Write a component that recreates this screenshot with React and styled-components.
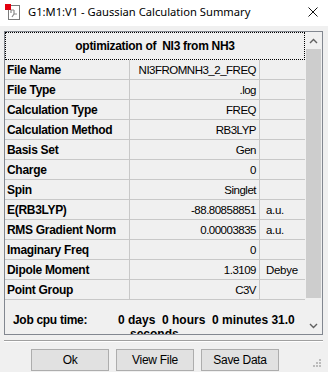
import React from "react";
import styled, { createGlobalStyle } from "styled-components";

const GlobalStyle = createGlobalStyle`
  *, *::before, *::after { box-sizing: border-box; }
  html, body { margin: 0; padding: 0; background: #f0f0f0; }
  body { font-family: "Liberation Sans", Arial, sans-serif; }
`;

const rows = [
  { label: "File Name", value: "NI3FROMNH3_2_FREQ" },
  { label: "File Type", value: ".log" },
  { label: "Calculation Type", value: "FREQ" },
  { label: "Calculation Method", value: "RB3LYP" },
  { label: "Basis Set", value: "Gen" },
  { label: "Charge", value: "0" },
  { label: "Spin", value: "Singlet" },
  { label: "E(RB3LYP)", value: "-88.80858851", unit: "a.u." },
  { label: "RMS Gradient Norm", value: "0.00003835", unit: "a.u." },
  { label: "Imaginary Freq", value: "0" },
  { label: "Dipole Moment", value: "1.3109", unit: "Debye" },
  { label: "Point Group", value: "C3V" },
];

export default () => {
  return (
    <>
      <GlobalStyle />
      <Window>
        <TitleBar>
          <AppIcon viewBox="0 0 16 16">
            <rect x="3.5" y="1.5" width="11" height="14" fill="#fff" stroke="#7a7a7a" />
            <path d="M6 6h3M9 6v4M9 10h3M9 10l-2 3M6 6v3" stroke="#8a8a8a" strokeWidth="1.2" fill="none" />
            <rect x="0" y="0" width="6" height="6" fill="#e3000f" />
          </AppIcon>
          <Title>G1:M1:V1 - Gaussian Calculation Summary</Title>
          <CloseIcon viewBox="0 0 10 10">
            <path d="M0.5 0.5L9.5 9.5M9.5 0.5L0.5 9.5" stroke="#111" strokeWidth="1" />
          </CloseIcon>
        </TitleBar>
        <Content>
          <Panel>
            <Table>
              <HeaderRow>optimization of&nbsp; NI3 from NH3</HeaderRow>
              {rows.map((r) => (
                <Row key={r.label}>
                  <Label>{r.label}</Label>
                  <Value>{r.value}</Value>
                  <Unit>{r.unit}</Unit>
                </Row>
              ))}
              <JobRow>
                <JobLabel>Job cpu time:</JobLabel>
                <JobValue>
                  {"0 days  0 hours  0 minutes 31.0"}
                  <Wrapped>seconds</Wrapped>
                </JobValue>
              </JobRow>
            </Table>
            <Scrollbar>
              <Arrow viewBox="0 0 9 6">
                <path d="M1 5L4.5 1.5L8 5" stroke="#606060" strokeWidth="1.4" fill="none" />
              </Arrow>
              <Track>
                <Thumb />
              </Track>
              <Arrow viewBox="0 0 9 6">
                <path d="M1 1L4.5 4.5L8 1" stroke="#606060" strokeWidth="1.4" fill="none" />
              </Arrow>
            </Scrollbar>
          </Panel>
          <Separator />
          <Buttons>
            <Button>Ok</Button>
            <Button>View File</Button>
            <Button>Save Data</Button>
          </Buttons>
        </Content>
        <Grip viewBox="0 0 10 10">
          <rect x="8" y="0" width="2" height="2" />
          <rect x="5" y="3" width="2" height="2" />
          <rect x="8" y="3" width="2" height="2" />
          <rect x="2" y="6" width="2" height="2" />
          <rect x="5" y="6" width="2" height="2" />
          <rect x="8" y="6" width="2" height="2" />
        </Grip>
      </Window>
    </>
  );
};

const Window = styled.div`
  position: relative;
  width: 328px;
  height: 372px;
  background: #f0f0f0;
  overflow: hidden;
  display: flex;
  flex-direction: column;
`;

const TitleBar = styled.div`
  height: 26px;
  flex-shrink: 0;
  background: #fff;
  display: flex;
  align-items: center;
  padding: 0 10px 3px 5px;
`;

const AppIcon = styled.svg`
  width: 16px;
  height: 16px;
  flex-shrink: 0;
`;

const Title = styled.div`
  flex: 1;
  margin-left: 7px;
  font-family: "Noto Sans", "Open Sans", sans-serif;
  font-size: 11.2px;
  color: #000;
  white-space: nowrap;
`;

const CloseIcon = styled.svg`
  width: 10px;
  height: 10px;
`;

const Content = styled.div`
  padding: 5px 5px 0 4px;
  display: flex;
  flex-direction: column;
`;

const Panel = styled.div`
  height: 304px;
  flex-shrink: 0;
  border: 1px solid #828790;
  display: flex;
  overflow: hidden;
`;

const Table = styled.div`
  width: 300px;
  display: flex;
  flex-direction: column;
  overflow: hidden;
  font-size: 12px;
  color: #000;
`;

const HeaderRow = styled.div`
  height: 28px;
  border: 1px dotted #000;
  display: flex;
  align-items: center;
  justify-content: center;
  font-weight: bold;
  letter-spacing: -0.3px;
  flex-shrink: 0;
`;

const Row = styled.div`
  display: grid;
  grid-template-columns: 125px 130px 45px;
  height: 20px;
  border-bottom: 1px solid #c8c8c8;
  flex-shrink: 0;
`;

const Cell = styled.div`
  display: flex;
  align-items: center;
  white-space: nowrap;
  overflow: hidden;
`;

const Label = styled(Cell)`
  padding-left: 2px;
  font-weight: bold;
  letter-spacing: -0.3px;
  border-right: 1px solid #c8c8c8;
`;

const Value = styled(Cell)`
  justify-content: flex-end;
  padding-right: 3px;
  font-size: 11.5px;
  letter-spacing: -0.5px;
  border-right: 1px solid #c8c8c8;
`;

const Unit = styled(Cell)`
  padding-left: 6px;
  font-size: 11.5px;
  letter-spacing: -0.3px;
`;

const JobRow = styled.div`
  display: flex;
  padding: 13px 0 0 8px;
  font-weight: bold;
  line-height: 14px;
`;

const JobLabel = styled.div`
  width: 105px;
  flex-shrink: 0;
  letter-spacing: -0.3px;
`;

const JobValue = styled.div`
  white-space: pre;
`;

const Wrapped = styled.div`
  padding-left: 12px;
`;

const Scrollbar = styled.div`
  width: 17px;
  display: flex;
  flex-direction: column;
  background: #f0f0f0;
`;

const Arrow = styled.svg`
  width: 17px;
  height: 17px;
  padding: 6px 4px 5px;
  flex-shrink: 0;
`;

const Track = styled.div`
  flex: 1;
  padding: 0 1px;
  display: flex;
  flex-direction: column;
`;

const Thumb = styled.div`
  flex: 1;
  margin: 0 0 19px;
  background: #cdcdcd;
`;

const Separator = styled.div`
  margin-top: 5px;
  height: 2px;
  background: #a0a0a0;
  border-bottom: 1px solid #fff;
`;

const Buttons = styled.div`
  display: flex;
  gap: 7px;
  padding: 7px 0 0 27px;
`;

const Button = styled.button`
  width: 78px;
  height: 22px;
  margin: 0;
  padding: 0;
  background: #e1e1e1;
  border: 1px solid #adadad;
  font-family: "Liberation Sans", Arial, sans-serif;
  font-size: 12px;
  letter-spacing: -0.3px;
  color: #000;
`;

const Grip = styled.svg`
  position: absolute;
  right: 7px;
  bottom: 3px;
  width: 10px;
  height: 10px;
  fill: #bcbcbc;
`;
